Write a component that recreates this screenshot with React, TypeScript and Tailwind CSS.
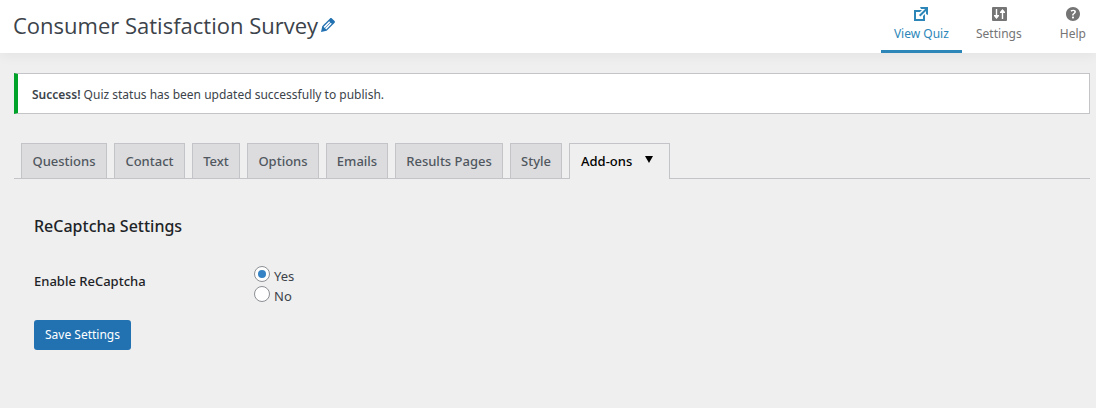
import { useState } from "react";

const tabs = [
  { id: "questions", label: "Questions", width: "w-[86px]" },
  { id: "contact", label: "Contact", width: "w-[71px]" },
  { id: "text", label: "Text", width: "w-12" },
  { id: "options", label: "Options", width: "w-[72px]" },
  { id: "emails", label: "Emails", width: "w-[62px]" },
  { id: "results", label: "Results Pages", width: "w-[108px]" },
  { id: "style", label: "Style", width: "w-[52px]" },
];

function PencilIcon() {
  return (
    <svg className="size-5" viewBox="0 0 20 20" fill="currentColor" aria-hidden="true">
      <path d="m13.89 3.39 2.71 2.72c.46.46.42 1.24.03 1.64l-8.01 8.02-5.56 1.16 1.16-5.58s7.6-7.63 7.99-8.03c.39-.39 1.22-.39 1.68.07zm-2.73 2.79-5.59 5.61 1.11 1.11 5.54-5.65zm-2.97 8.23 5.58-5.6-1.07-1.08-5.59 5.6z" />
    </svg>
  );
}

function ExternalIcon() {
  return (
    <svg className="size-5" viewBox="0 0 20 20" fill="currentColor" aria-hidden="true">
      <path d="M9 3h8v8l-2-1V6.92l-5.6 5.59-1.41-1.41L14.08 5H10zm3 12v-3l2-2v7H3V6h8L9 8H5v7h7z" />
    </svg>
  );
}

function SettingsIcon() {
  return (
    <svg className="size-5" viewBox="0 0 20 20" aria-hidden="true">
      <rect x="3" y="3" width="15" height="14" rx="1" fill="currentColor" />
      <path d="M7.500 5v9M13.500 6v9" stroke="white" strokeWidth="1.400" />
      <path d="M5 11h5v1l-2.500 3L5 12zM11 9h5V8l-2.500-3L11 8z" fill="white" />
    </svg>
  );
}

function HelpIcon() {
  return (
    <svg className="size-5" viewBox="0 0 20 20" fill="currentColor" aria-hidden="true">
      <path d="M17 10c0-3.870-3.140-7-7-7-3.870 0-7 3.130-7 7s3.130 7 7 7c3.860 0 7-3.130 7-7zm-6.300 1.480H9.140v-.43c0-.38.08-.7.24-.98s.46-.57.88-.89c.41-.29.68-.53.81-.71.14-.18.200-.39.200-.62 0-.25-.09-.44-.28-.58-.190-.13-.450-.190-.790-.190-.580 0-1.250.190-2 .570l-.640-1.280c.870-.490 1.800-.740 2.770-.740.810 0 1.450.200 1.920.580.480.390.710.910.710 1.550 0 .430-.090.800-.290 1.110-.190.320-.570.670-1.110 1.060-.380.280-.610.490-.710.630-.100.150-.150.340-.150.570v.350zm-1.470 2.740c-.180-.170-.270-.420-.270-.730 0-.330.080-.580.260-.750s.430-.250.770-.250c.320 0 .570.090.750.260s.270.420.270.740c0 .300-.090.550-.270.720-.180.180-.430.270-.750.270-.330 0-.580-.090-.760-.260z" />
    </svg>
  );
}

function Header() {
  return (
    <header className="flex h-[53px] items-stretch justify-between bg-white shadow-[0_3px_12px_rgba(0,0,0,0.05)]">
      <div className="flex items-center pb-1 pl-[13px]">
        <h1 className="font-['Open_Sans',sans-serif] text-[22px] leading-8">Consumer Satisfaction Survey</h1>
        <button type="button" aria-label="Edit name" className="text-[#2271b1]">
          <PencilIcon />
        </button>
      </div>
      <nav className="flex text-[12px] leading-[19px] text-[#757575]">
        <a
          href="#view"
          className="flex w-[81px] flex-col items-center border-b-3 border-[#2c87b8] pt-1 text-[#2c87b8]"
        >
          <ExternalIcon />
          View Quiz
        </a>
        <a href="#settings" className="flex w-[74px] flex-col items-center pt-1">
          <SettingsIcon />
          Settings
        </a>
        <a href="#help" className="flex flex-col items-center pt-1 pr-[10px] pl-6">
          <HelpIcon />
          Help
        </a>
      </nav>
    </header>
  );
}

function TabBar() {
  const [active, setActive] = useState("addons");

  function tabClass(id: string) {
    return active === id
      ? "-mb-px border border-b-0 border-[#c3c4c7] bg-[#efefef] text-black"
      : "border border-b-0 border-[#c3c4c7] bg-[#dcdcde] text-[#50575e]";
  }

  return (
    <nav className="mt-[29px] flex h-9 gap-[7px] border-b border-[#c3c4c7] pl-[7px] text-[13px] font-medium whitespace-nowrap">
      {tabs.map((tab) => (
        <button
          key={tab.id}
          type="button"
          onClick={() => setActive(tab.id)}
          className={`pt-px ${tab.width} ${tabClass(tab.id)}`}
        >
          {tab.label}
        </button>
      ))}
      <button
        type="button"
        onClick={() => setActive("addons")}
        className={`flex w-[101px] items-center gap-[13px] pl-[11px] ${tabClass("addons")}`}
      >
        Add-ons
        <svg className="mb-1 h-[7px] w-2" viewBox="0 0 8 7" fill="currentColor" aria-hidden="true">
          <path d="M0 0h8L4 7z" />
        </svg>
      </button>
    </nav>
  );
}

function Radio({ value, checked, onChange }: { value: string; checked: boolean; onChange: () => void }) {
  return (
    <label className="flex h-5 items-start gap-1">
      <input
        type="radio"
        name="recaptcha"
        checked={checked}
        onChange={onChange}
        className="grid size-4 shrink-0 appearance-none place-content-center rounded-full border border-[#8c8f94] bg-white before:size-2 before:rounded-full checked:before:bg-[#3582c4]"
      />
      <span className="leading-5">{value}</span>
    </label>
  );
}

export default function App() {
  const [enabled, setEnabled] = useState("Yes");

  return (
    <div className="min-h-screen bg-[#efefef] pb-10 font-['Noto_Sans',sans-serif] text-[13px] text-[#3c434a]">
      <Header />
      <main className="mt-5 mr-[6px] ml-[14px]">
        <div className="flex h-[41px] items-center border border-l-4 border-[#c3c4c7] border-l-[#00a32a] bg-white pt-[2px] pl-[14px] text-[12px]">
          <p>
            <strong className="font-semibold">Success!</strong> Quiz status has been updated successfully to publish.
          </p>
        </div>
        <TabBar />
        <form className="px-5 pt-[35px]" onSubmit={(e) => e.preventDefault()}>
          <h2 className="text-[16px] leading-6 font-medium text-[#1d2327]">ReCaptcha Settings</h2>
          <div role="radiogroup" aria-labelledby="recaptcha-label" className="mt-7 flex items-start">
            <span id="recaptcha-label" className="w-[220px] pt-[5px] leading-5 font-medium text-[#1d2327]">
              Enable ReCaptcha
            </span>
            <div>
              {["Yes", "No"].map((value) => (
                <Radio
                  key={value}
                  value={value}
                  checked={enabled === value}
                  onChange={() => setEnabled(value)}
                />
              ))}
            </div>
          </div>
          <button
            type="submit"
            className="mt-[14px] h-[30px] rounded-[3px] bg-[#2271b1] px-[11px] text-[12px] text-white"
          >
            Save Settings
          </button>
        </form>
      </main>
    </div>
  );
}
